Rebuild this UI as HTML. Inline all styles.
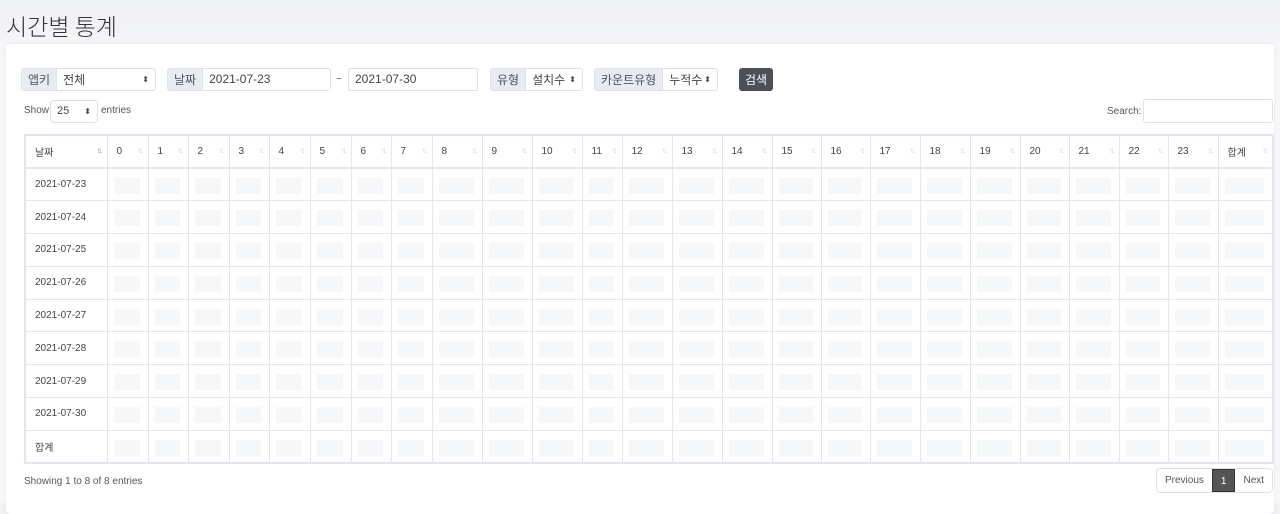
<!DOCTYPE html>
<html><head><meta charset="utf-8"><style>
*{box-sizing:border-box;margin:0;padding:0}
body{width:1280px;height:503px;overflow:hidden;background:linear-gradient(#f0f1f5,#f6f7f9 60px,#f6f7f9);font-family:"Liberation Sans","Noto Sans CJK KR",sans-serif;color:#333;position:relative}
h1{position:absolute;left:6px;top:8px;font-size:23px;font-weight:300;color:#333;font-family:"Noto Sans CJK KR",sans-serif}
.card{position:absolute;left:6px;top:44px;width:1268px;height:470px;background:#fff;border-radius:4px;box-shadow:0 0 4px rgba(0,0,0,.06)}
.grp{position:absolute;top:68px;height:23px;display:flex;border:1px solid #dfe1ea;border-radius:3px;font-size:12px;font-family:"Noto Sans CJK KR","Liberation Sans",sans-serif}
.grp .l{background:#e9ebf2;color:#555;padding:0 6px;line-height:21px;border-right:1px solid #dfe1ea}
.grp .v{padding:0 6px;line-height:21px;color:#444;flex:1;position:relative}
.ar{position:absolute;right:6px;top:0;font-size:8px;line-height:21px}
.inp{position:absolute;top:68px;height:23px;border:1px solid #dfe1ea;border-radius:2px;font-size:12px;line-height:21px;padding-left:6px;color:#444}
.btn{position:absolute;left:739px;top:68px;width:34px;height:23px;background:#4d5059;color:#fff;border-radius:3px;font-size:12px;text-align:center;line-height:23px;font-family:"Noto Sans CJK KR",sans-serif}
.sm{position:absolute;font-size:10px;color:#555}
table{position:absolute;left:24px;top:134px;border-collapse:collapse;table-layout:fixed;width:1248px;border:2px solid #e4e6ef}
td,th{border:1px solid #e4e6ef;height:33px;font-size:10px;text-align:left;padding-left:9px;font-weight:400;color:#444;position:relative;font-family:"Liberation Sans","Noto Sans CJK KR",sans-serif}
td{height:32.8px}
th{height:33px;border-bottom:2px solid #e4e6ef}
th::after{content:"↑↓";position:absolute;right:6px;top:10px;font-size:8px;color:#ccc;letter-spacing:-2px}
th.f::after{color:#888}
td.b::before{content:"";position:absolute;left:6px;top:9px;right:8px;height:16px;background:#f6f7f9}
.pg{position:absolute;left:1156px;top:468px;height:25px;display:flex;border:1px solid #dfe1ea;border-radius:4px;font-size:10px;color:#555}
.pg div{line-height:23px;padding:0 8px}
.pg .a{background:#555;color:#fff;border:1px solid #333}
</style></head><body>
<h1>시간별 통계</h1>
<div class="card"></div>
<div class="grp" style="left:21px;width:135px"><div class="l">앱키</div><div class="v">전체<span class="ar">⬍</span></div></div>
<div class="grp" style="left:167px;width:164px"><div class="l">날짜</div><div class="v" style="font-family:'Liberation Sans'">2021-07-23</div></div>
<div class="sm" style="left:336px;top:74px">~</div>
<div class="inp" style="left:348px;width:130px">2021-07-30</div>
<div class="grp" style="left:490px;width:93px"><div class="l">유형</div><div class="v">설치수<span class="ar">⬍</span></div></div>
<div class="grp" style="left:594px;width:124px"><div class="l">카운트유형</div><div class="v">누적수<span class="ar">⬍</span></div></div>
<div class="btn">검색</div>
<div class="sm" style="left:24px;top:105px">Show</div>
<div class="inp" style="left:50px;top:100px;width:48px;height:23px;font-size:11px;border-radius:4px">25<span class="ar" style="right:6px">⬍</span></div>
<div class="sm" style="left:101px;top:105px">entries</div>
<div class="sm" style="left:1107px;top:106px">Search:</div>
<div class="inp" style="left:1143px;top:99px;width:130px;height:24px;border-radius:3px"></div>
<table>
<colgroup><col style="width:82px"><col style="width:41px"><col style="width:40px"><col style="width:41px"><col style="width:40px"><col style="width:41px"><col style="width:41px"><col style="width:40px"><col style="width:41px"><col style="width:50px"><col style="width:50px"><col style="width:50px"><col style="width:40px"><col style="width:50px"><col style="width:50px"><col style="width:50px"><col style="width:49px"><col style="width:49px"><col style="width:50px"><col style="width:50px"><col style="width:50px"><col style="width:49px"><col style="width:50px"><col style="width:49px"><col style="width:50px"><col style="width:55px"></colgroup>
<thead><tr><th class="f">날짜</th><th>0</th><th>1</th><th>2</th><th>3</th><th>4</th><th>5</th><th>6</th><th>7</th><th>8</th><th>9</th><th>10</th><th>11</th><th>12</th><th>13</th><th>14</th><th>15</th><th>16</th><th>17</th><th>18</th><th>19</th><th>20</th><th>21</th><th>22</th><th>23</th><th>합계</th></tr></thead>
<tbody id="tb"></tbody>
</table>
<script>
var d=["2021-07-23","2021-07-24","2021-07-25","2021-07-26","2021-07-27","2021-07-28","2021-07-29","2021-07-30","합계"],h="";
d.forEach(function(x){h+="<tr><td>"+x+"</td>";for(var i=0;i<25;i++)h+='<td class="b"></td>';h+="</tr>"});
document.getElementById("tb").innerHTML=h;
</script>
<div class="sm" style="left:24px;top:476px">Showing 1 to 8 of 8 entries</div>
<div class="pg"><div>Previous</div><div class="a">1</div><div>Next</div></div>
</body></html>
